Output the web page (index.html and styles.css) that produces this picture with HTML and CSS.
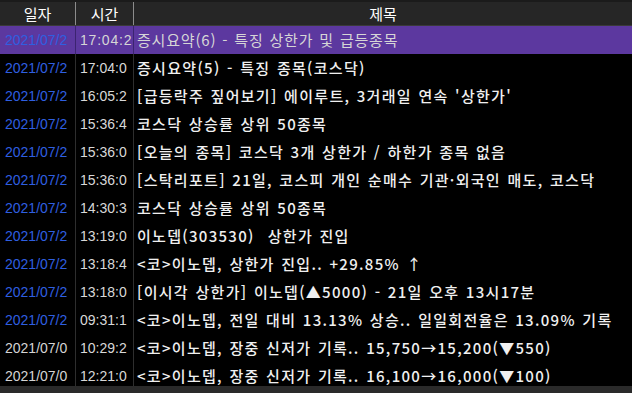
FILE: index.html
```html
<!DOCTYPE html>
<html lang="ko">
<head>
<meta charset="utf-8">
<link rel="stylesheet" href="styles.css">
</head>
<body>
<div class="grid">
  <div class="head">
    <div class="hc c1">일자</div>
    <div class="hc c2">시간</div>
    <div class="hc c3">제목</div>
  </div>
  <div class="rows">
    <div class="row sel"><div class="c1 date">2021/07/2</div><div class="c2 time">17:04:2</div><div class="c3 title">증시요약(6) - 특징 상한가 및 급등종목</div></div>
    <div class="row"><div class="c1 date">2021/07/2</div><div class="c2 time">17:04:0</div><div class="c3 title">증시요약(5) - 특징 종목(코스닥)</div></div>
    <div class="row"><div class="c1 date">2021/07/2</div><div class="c2 time">16:05:2</div><div class="c3 title">[급등락주 짚어보기] 에이루트, 3거래일 연속 '상한가'</div></div>
    <div class="row"><div class="c1 date">2021/07/2</div><div class="c2 time">15:36:4</div><div class="c3 title">코스닥 상승률 상위 50종목</div></div>
    <div class="row"><div class="c1 date">2021/07/2</div><div class="c2 time">15:36:0</div><div class="c3 title">[오늘의 종목] 코스닥 3개 상한가 / 하한가 종목 없음</div></div>
    <div class="row"><div class="c1 date">2021/07/2</div><div class="c2 time">15:36:0</div><div class="c3 title">[스탁리포트] 21일, 코스피 개인 순매수 기관·외국인 매도, 코스닥</div></div>
    <div class="row"><div class="c1 date">2021/07/2</div><div class="c2 time">14:30:3</div><div class="c3 title">코스닥 상승률 상위 50종목</div></div>
    <div class="row"><div class="c1 date">2021/07/2</div><div class="c2 time">13:19:0</div><div class="c3 title">이노뎁(303530) &nbsp;상한가 진입</div></div>
    <div class="row"><div class="c1 date">2021/07/2</div><div class="c2 time">13:18:4</div><div class="c3 title">&lt;코&gt;이노뎁, 상한가 진입.. +29.85% ↑</div></div>
    <div class="row"><div class="c1 date">2021/07/2</div><div class="c2 time">13:18:0</div><div class="c3 title">[이시각 상한가] 이노뎁(▲5000) - 21일 오후 13시17분</div></div>
    <div class="row"><div class="c1 date">2021/07/2</div><div class="c2 time">09:31:1</div><div class="c3 title">&lt;코&gt;이노뎁, 전일 대비 13.13% 상승.. 일일회전율은 13.09% 기록</div></div>
    <div class="row"><div class="c1 date old">2021/07/0</div><div class="c2 time">10:29:2</div><div class="c3 title">&lt;코&gt;이노뎁, 장중 신저가 기록.. 15,750→15,200(▼550)</div></div>
    <div class="row"><div class="c1 date old">2021/07/0</div><div class="c2 time">12:21:0</div><div class="c3 title">&lt;코&gt;이노뎁, 장중 신저가 기록.. 16,100→16,000(▼100)</div></div>
  </div>
  <div class="hscroll"></div>
</div>
</body>
</html>
```
FILE: styles.css
```css
html, body {
  margin: 0;
  padding: 0;
  background: #000;
}
body {
  width: 632px;
  height: 393px;
  overflow: hidden;
  font-family: "Liberation Sans", "Noto Sans CJK KR", sans-serif;
  font-size: 14px;
}
.grid {
  display: flex;
  flex-direction: column;
  height: 393px;
  border-top: 2px solid #1b1b1b;
  box-sizing: border-box;
}
.head {
  display: grid;
  grid-template-columns: 76px 58px 1fr;
  height: 23px;
  background: #262626;
  border-bottom: 1px solid #3a3a3a;
  flex: none;
}
.hc {
  color: #fff;
  font-family: "Noto Sans CJK KR", sans-serif;
  font-size: 15px;
  line-height: 23px;
  text-align: center;
}
.head .c1, .head .c2 {
  border-right: 1px solid #8c8c8c;
}
.rows {
  flex: 1;
  overflow: hidden;
  display: flex;
  flex-direction: column;
}
.row {
  display: grid;
  grid-template-columns: 76px 58px 1fr;
  height: 28px;
  flex: none;
  line-height: 28px;
}
.row > div {
  overflow: hidden;
  white-space: nowrap;
}
.row .c1, .row .c2 {
  border-right: 1px solid #2e2e2e;
}
.date {
  color: #2f5fe0;
  padding-left: 5px;
}
.date.old {
  color: #d4d4d4;
}
.time {
  color: #d8d8d8;
  padding-left: 4px;
}
.title {
  color: #f0f0f0;
  padding-left: 3px;
  font-family: "Noto Sans CJK KR", sans-serif;
  font-size: 15px;
  letter-spacing: 1.3px;
  word-spacing: 1px;
  font-weight: 500;
}
.row.sel {
  background: #5c389f;
}
.row.sel .c1, .row.sel .c2 {
  border-right-color: #3c2470;
}
.row.sel .time, .row.sel .title {
  color: #d6d6d6;
  font-weight: 400;
  letter-spacing: 0.8px;
}
.hscroll {
  flex: none;
  height: 7px;
  background: #2a2a2a;
}
```
